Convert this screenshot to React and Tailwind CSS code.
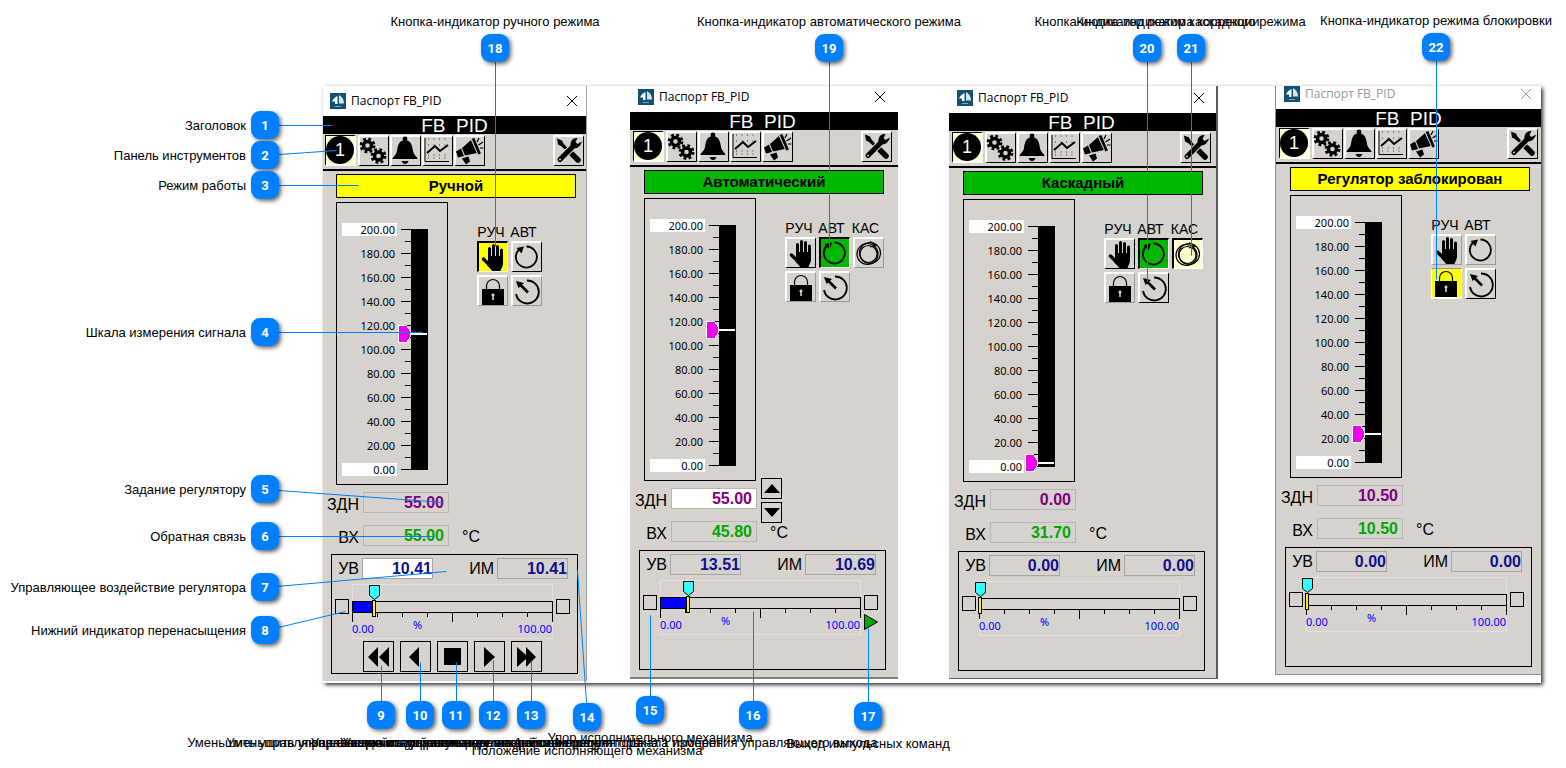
import clsx from 'clsx'

const passports = [
  {
    id: 'manual',
    frame: 'w-[264px] border-r border-[#a0a0a0]',
    shift: '',
    titleBar: 'h-[30px]',
    mode: 'Ручной',
    modeColor: 'bg-[#ffff00]',
    level: 112.5,
    setpoint: '55.00',
    input: '55.00',
    output: '10.41',
    actuator: '10.41',
    outputEditable: true,
    player: true,
    states: { hand: 'pressedYellow', loop: 'raised', lock: 'flat', gauge: 'flat' },
  },
  {
    id: 'auto',
    frame: 'ml-[43px] w-[268px] border-b-2 border-[#808080]',
    shift: 'ml-px',
    titleBar: 'h-[26px]',
    mode: 'Автоматический',
    modeColor: 'bg-[#00b800]',
    level: 112.5,
    setpoint: '55.00',
    input: '45.80',
    output: '13.51',
    actuator: '10.69',
    setpointEditable: true,
    pulse: true,
    states: { hand: 'raised', loop: 'pressedGreen', cascade: 'flat', lock: 'flat', gauge: 'flat' },
  },
  {
    id: 'cascade',
    frame: 'ml-[51px] w-[269px] border-r-2 border-b border-[#5c5c5c]',
    shift: 'ml-px',
    titleBar: 'h-[27px]',
    mode: 'Каскадный',
    modeColor: 'bg-[#00b800]',
    level: 2.5,
    setpoint: '0.00',
    input: '31.70',
    output: '0.00',
    actuator: '0.00',
    states: { hand: 'raised', loop: 'pressedGreen', cascade: 'pressedCream', lock: 'flat', gauge: 'raised' },
  },
  {
    id: 'locked',
    frame: 'ml-[57px] w-[266px] border-l border-b border-[#8c8c8c]',
    shift: 'ml-px',
    titleBar: 'h-[23px]',
    inactive: true,
    mode: 'Регулятор заблокирован',
    modeColor: 'bg-[#ffff00]',
    level: 23.5,
    setpoint: '10.50',
    input: '10.50',
    output: '0.00',
    actuator: '0.00',
    states: { hand: 'flat', loop: 'flat', lock: 'yellow', gauge: 'raised' },
  },
]

// x, y: badge centre; tx, ty: the point the leader line ends at
const callouts = [
  { n: 1, x: 265, y: 125, tx: 331, ty: 125, text: 'Заголовок', side: 'left' },
  { n: 2, x: 265, y: 155, tx: 336, ty: 150, text: 'Панель инструментов', side: 'left' },
  { n: 3, x: 265, y: 185, tx: 358, ty: 185, text: 'Режим работы', side: 'left' },
  { n: 4, x: 265, y: 332, tx: 422, ty: 332, text: 'Шкала измерения сигнала', side: 'left' },
  { n: 5, x: 265, y: 489, tx: 443, ty: 502, text: 'Задание регулятору', side: 'left' },
  { n: 6, x: 265, y: 536, tx: 434, ty: 536, text: 'Обратная связь', side: 'left' },
  { n: 7, x: 265, y: 587, tx: 446, ty: 571, text: 'Управляющее воздействие регулятора', side: 'left' },
  { n: 8, x: 265, y: 630, tx: 345, ty: 611, text: 'Нижний индикатор перенасыщения', side: 'left' },
  { n: 9, x: 381, y: 715, tx: 381, ty: 665, text: 'Уменьшить управляющее воздействие регулятора на 1 процент', side: 'bottom' },
  { n: 10, x: 420, y: 715, tx: 420, ty: 662, text: 'Уменьшить управляющее воздействие регулятора на 1 процент', side: 'bottom' },
  { n: 11, x: 456, y: 715, tx: 456, ty: 662, text: 'Управление исполнительным механизмом: стоп', side: 'bottom' },
  { n: 12, x: 493, y: 715, tx: 493, ty: 660, text: 'Увеличить управляющее воздействие регулятора', side: 'bottom' },
  { n: 13, x: 531, y: 715, tx: 531, ty: 661, text: 'Увеличить управляющее воздействие регулятора на 1 процент', side: 'bottom' },
  { n: 14, x: 587, y: 717, tx: 577, ty: 570, text: 'Положение исполняющего механизма', side: 'bottomLow' },
  { n: 15, x: 650, y: 710, tx: 650, ty: 615, text: 'Упор исполнительного механизма', side: 'bottom' },
  { n: 16, x: 753, y: 715, tx: 753, ty: 611, text: 'Шкала измерения управляющего выхода', side: 'bottom' },
  { n: 17, x: 868, y: 716, tx: 868, ty: 628, text: 'Выход импульсных команд', side: 'bottom' },
  { n: 18, x: 495, y: 48, tx: 495, ty: 246, text: 'Кнопка-индикатор ручного режима', side: 'top' },
  { n: 19, x: 829, y: 48, tx: 829, ty: 253, text: 'Кнопка-индикатор автоматического режима', side: 'top' },
  { n: 20, x: 1147, y: 48, tx: 1147, ty: 281, text: 'Кнопка-индикатор режима коррекции', side: 'top' },
  { n: 21, x: 1191, y: 48, tx: 1191, ty: 255, text: 'Кнопка-индикатор каскадного режима', side: 'top' },
  { n: 22, x: 1436, y: 47, tx: 1436, ty: 279, text: 'Кнопка-индикатор режима блокировки', side: 'top' },
]

const bevels = {
  raised: 'bg-[#d6d3ce] border-t-2 border-l-2 border-b border-r border-t-white border-l-white border-b-black border-r-black',
  flat: 'bg-[#d6d3ce] border-t-2 border-l-2 border-b border-r border-t-white border-l-white border-b-[#9a9a9a] border-r-[#9a9a9a]',
  cream: 'bg-[#ffffd0] border-t border-l border-b-2 border-r-2 border-t-black border-l-black border-b-white border-r-white',
  pressedCream: 'bg-[#ffffd0] border-t-2 border-l-2 border-b border-r border-t-black border-l-black border-b-white border-r-white',
  pressedYellow: 'bg-[#ffff00] border-t-2 border-l-2 border-b border-r border-t-black border-l-black border-b-white border-r-white',
  pressedGreen: 'bg-[#00b800] border-t-2 border-l-2 border-b border-r border-t-black border-l-black border-b-white border-r-white',
  yellow: 'bg-[#ffff00] border-t border-l border-b-2 border-r border-t-[#9a9a9a] border-l-white border-b-white border-r-white',
}

const Glyph = ({ children }) => (
  <svg viewBox="0 0 28 28" className="block w-7 h-7 shrink-0 overflow-visible" aria-hidden="true">
    {children}
  </svg>
)

const Gear = ({ cx, cy }) => (
  <>
    <circle cx={cx} cy={cy} r="4" fill="none" stroke="#000" strokeWidth="3.4" />
    <circle cx={cx} cy={cy} r="6.4" fill="none" stroke="#000" strokeWidth="3" strokeDasharray="2.7 2.326" />
  </>
)

const GearsIcon = () => (
  <Glyph>
    <Gear cx="7.5" cy="8.5" />
    <Gear cx="18.5" cy="19" />
  </Glyph>
)

const BellIcon = () => (
  <Glyph>
    <circle cx="13" cy="2" r="2.4" />
    <path d="M.5 22c0-2.500 3.500-3 4.500-8C6 8 6.500 4 13 3c6.500 1 7 5 8 11 1 5 4.500 5.500 4.500 8z" />
    <path d="M9.500 24h7c-.5 2-2 3-3.500 3s-3-1-3.500-3z" />
  </Glyph>
)

const ChartIcon = () => (
  <Glyph>
    {[2, 8, 18, 21].map((y) => (
      <path key={y} d={`M4 ${y}h22`} stroke="#333" strokeWidth="1" strokeDasharray="1 4.500" />
    ))}
    <path d="M1 1v23.500h24" fill="none" stroke="#000" />
    <path d="M3 16l8-7 5 5 8-6" fill="none" stroke="#000" strokeWidth="2" />
  </Glyph>
)

const HornIcon = () => (
  <Glyph>
    <path d="M0 14.500l5-3 3 7.500-6 1.500zM6 11l9-8 6 13-12 2.500zM6 21.500l6.500-2 1.500 5-4 3z" />
    <path d="M17 1.500l6.500 15.500" stroke="#000" strokeWidth="3" />
    <path d="M15.500 3l6 13.500" stroke="#d6d3ce" strokeWidth=".8" />
    <path d="M21 5l2-4M22.500 8l4.500-3M24 11h3.500" stroke="#000" strokeWidth="1.200" />
  </Glyph>
)

const ToolsIcon = () => (
  <Glyph>
    <path d="M2 1.500l5 2 1.500 3 8 9-1.500 1.500-9-8-3-1.500z" />
    <path d="M17 17l6 6" stroke="#000" strokeWidth="5.500" strokeLinecap="round" />
    <path d="M5 22.500L18 9.500" stroke="#d6d3ce" strokeWidth="7" strokeLinecap="round" />
    <path d="M5 22.500L18 9.500" stroke="#000" strokeWidth="5" strokeLinecap="round" />
    <path d="M22.500 1c-4-.5-7.500 2.500-7 7.500 2 4.500 9 4 11.500-4l-4.500 2.500-2-2z" />
    <circle cx="5" cy="22.500" r="1" fill="#d6d3ce" />
  </Glyph>
)

const HandIcon = () => (
  <Glyph>
    <path d="M10.500 14V5.500M14.500 13V2.500M18.500 13V3.500M22.500 14V7" stroke="#000" strokeWidth="3" strokeLinecap="round" />
    <path d="M4.500 16l6 6" stroke="#000" strokeWidth="3.400" strokeLinecap="round" />
    <path d="M9 13h15v8c-.5 3-1.500 4-2.500 7H13c-1-2-3-3.500-5-6l1-2z" />
  </Glyph>
)

const LoopIcon = () => (
  <Glyph>
    <path d="M13.500 3.500A10.500 10.500 0 1 1 6 6.500" fill="none" stroke="#000" strokeWidth="1.800" />
    <path d="M3.500 5l7.500-1.500-2.500 7z" />
  </Glyph>
)

const GaugeIcon = () => (
  <Glyph>
    <path d="M14 3.500A11.500 11.500 0 1 1 3 17" fill="none" stroke="#000" strokeWidth="1.800" />
    <path d="M15 15.500L7 7.500" stroke="#000" strokeWidth="2.600" />
    <path d="M3 4l8 2-5.500 5z" />
  </Glyph>
)

const CascadeIcon = () => (
  <Glyph>
    <g fill="none" stroke="#000" strokeWidth="1.200">
      <circle cx="12.500" cy="15" r="10.500" />
      <circle cx="15" cy="14" r="10.500" />
      <circle cx="13.500" cy="15" r="8.500" />
      <path d="M15 2.500l6 4-6 1.500" />
    </g>
  </Glyph>
)

const LockIcon = () => (
  <Glyph>
    <path d="M7.500 13V9a6.500 6.500 0 0 1 13 0v4" fill="none" stroke="#000" strokeWidth="1.200" />
    <path d="M3 12h22v16H3z" />
    <path d="M14 16.500a1.500 1.500 0 0 1 .8 2.800V23h-1.600v-3.700a1.500 1.500 0 0 1 .8-2.800z" fill="#d6d3ce" />
  </Glyph>
)

const OneIcon = () => (
  <span className="flex w-7 h-7 items-center justify-center rounded-full bg-black text-white text-lg leading-none">1</span>
)

const IconButton = ({ label, bevel = 'raised', children }) => (
  <button type="button" aria-label={label} className={clsx('w-[31px] h-[31px] shrink-0', bevels[bevel])}>
    {children}
  </button>
)

const PlainButton = ({ label, className, children }) => (
  <button type="button" aria-label={label} className={clsx('flex shrink-0 items-center justify-center border border-black', className)}>
    {children}
  </button>
)

const TitleBar = ({ height, inactive, shift }) => (
  <div className={clsx('flex items-end overflow-hidden bg-white', height)}>
    <div className={clsx('flex h-[30px] w-[263px] shrink-0 items-center pl-[7px] pr-2', shift)}>
      <svg viewBox="0 0 16 16" className="w-4 h-4" aria-hidden="true">
        <path d="M0 0h16v16H0z" fill="#135072" />
        <path d="M7.500 3v8H5V8.500H2C3 6 5 4 7.500 3z" fill="#fff" />
        <path d="M9 2c3 1.500 5 4.500 5 8.500H9z" fill="#d5e3ea" />
        <path d="M5 13.500h6" stroke="#7aa5bb" />
      </svg>
      <span className={clsx("ml-[5px] grow font-['Open_Sans',sans-serif] text-xs", inactive ? 'text-[#999]' : 'text-black')}>
        Паспорт FB_PID
      </span>
      <button type="button" aria-label="Закрыть" className="p-px">
        <svg viewBox="0 0 10 10" className="w-2.5 h-2.5" aria-hidden="true">
          <path d="M0 0l10 10M10 0L0 10" stroke={inactive ? '#999' : '#000'} />
        </svg>
      </button>
    </div>
  </div>
)

const Toolbar = ({ shift }) => (
  <div className="h-[37px] border-b-2 border-black pt-px">
    <div className={clsx('flex w-[263px] items-start gap-px px-0.5', shift)}>
      <IconButton label="Основная страница" bevel="cream"><OneIcon /></IconButton>
      <div className="ml-px flex gap-px">
        <IconButton label="Настройки"><GearsIcon /></IconButton>
        <IconButton label="Сигнализация"><BellIcon /></IconButton>
        <IconButton label="Тренд"><ChartIcon /></IconButton>
        <IconButton label="Оповещение"><HornIcon /></IconButton>
      </div>
      <span className="grow" />
      <IconButton label="Сервис"><ToolsIcon /></IconButton>
    </div>
  </div>
)

const LevelScale = ({ value }) => {
  const marks = [200, 180, 160, 140, 120, 100, 80, 60, 40, 20, 0]
  const y = 252 - Math.floor(value * 1.2)

  return (
    <div className="ml-[13px] flex h-[283px] w-[112px] border border-black pl-[5px] pt-3.5">
      <ul className="w-[55px] font-['Noto_Sans',sans-serif] text-[11px]">
        {marks.map((mark) => (
          <li key={mark} className="flex h-6 items-center">
            <span className={clsx('block h-[13px] w-full pr-0.5 text-right leading-[13px]', (mark === 200 || mark === 0) && 'bg-white')}>
              {mark.toFixed(2)}
            </span>
          </li>
        ))}
      </ul>
      <svg viewBox="0 0 34 264" className="w-[34px] h-[264px]" shapeRendering="crispEdges" aria-hidden="true">
        <path d="M14 12h17v241H14z" />
        {marks.map((mark) => (
          <path key={mark} d={`M4 ${252.5 - mark * 1.2}h10`} stroke="#000" />
        ))}
        {marks.slice(1).map((mark) => (
          <path key={mark} d={`M8 ${240.5 - mark * 1.2}h6`} stroke="#000" />
        ))}
        <path d={`M14 ${y}h16`} stroke="#fff" strokeWidth="2" />
        <path d={`M1.500 ${y - 8.5}h8l4 6v5l-4 6h-8z`} fill="#ee00ee" stroke="#fff" />
      </svg>
    </div>
  )
}

const Value = ({ id, label, value, className, labelClass, rowClass }) => (
  <div className={clsx('flex h-[21px]', rowClass)}>
    <label htmlFor={id} className={clsx('text-right text-base leading-[21px]', labelClass)}>{label}</label>
    <input
      id={id}
      defaultValue={value}
      className={clsx('h-[21px] border text-right text-base font-bold outline-none', className)}
    />
  </div>
)

const ModePad = ({ states }) => (
  <div className="ml-6 h-[280px] pt-[21px]">
    <div className="grid grid-cols-[28px_31px_31px] gap-x-[3px] text-center text-sm leading-[18px]">
      <span>РУЧ</span>
      <span>АВТ</span>
      {states.cascade && <span>КАС</span>}
    </div>
    <div className="grid grid-cols-[31px_31px_31px] gap-[3px]">
      <IconButton label="Ручной режим" bevel={states.hand}><HandIcon /></IconButton>
      <IconButton label="Автоматический режим" bevel={states.loop}><LoopIcon /></IconButton>
      {states.cascade ? (
        <IconButton label="Каскадный режим" bevel={states.cascade}><CascadeIcon /></IconButton>
      ) : (
        <span />
      )}
      <IconButton label="Блокировка" bevel={states.lock}><LockIcon /></IconButton>
      <IconButton label="Режим слежения" bevel={states.gauge}><GaugeIcon /></IconButton>
    </div>
  </div>
)

const OutputBar = ({ percent, fill }) => {
  const x = Math.round(percent * 2)

  return (
    <div className="h-[55px] w-[201px] shadow-[inset_0_0_0_1px_#e2e0dc]">
      <svg viewBox="0 0 201 39" className="block h-[39px] w-[201px] overflow-visible" shapeRendering="crispEdges" aria-hidden="true">
        <path d="M.5 17.500h200v11H.5z" fill="none" stroke="#000" />
        {fill && <path d={`M1 18h${x}v10H1z`} fill="#0000ff" />}
        {[0, 1, 2, 3, 4, 5, 6, 7, 8].map((i) => (
          <path key={i} d={`M${i * 25 + 0.5} 29v${i % 4 === 0 ? 9 : 4}`} stroke="#000" />
        ))}
        <path d={`M${x - 0.5} 16.500h3v16h-3z`} fill="#ffee00" stroke="#000" />
        <path d={`M${x - 4 + 0.5} 1.500h10v10l-5 4-5-4z`} fill="#33ffff" stroke="#000" shapeRendering="auto" />
      </svg>
      <div className="flex justify-between pr-px font-['Noto_Sans',sans-serif] text-[11px] leading-3 text-[#0000ff]">
        <span className="w-[61px]">0.00</span>
        <span className="-mt-1 grow">%</span>
        <span>100.00</span>
      </div>
    </div>
  )
}

const Player = () => (
  <div className="mt-0.5 flex gap-1.5 pl-[31px]">
    <PlainButton label="Быстро уменьшить" className="w-[31px] h-[31px]">
      <svg viewBox="0 0 22 20" className="w-[22px] h-5"><path d="M10 0v20L0 10zM21 0v20L11 10z" /></svg>
    </PlainButton>
    <PlainButton label="Уменьшить" className="w-[31px] h-[31px]">
      <svg viewBox="0 0 22 20" className="w-[22px] h-5"><path d="M14 0v20L4 10z" /></svg>
    </PlainButton>
    <PlainButton label="Стоп" className="w-[31px] h-[31px]">
      <svg viewBox="0 0 22 20" className="w-[22px] h-5"><path d="M2 1h17v17H2z" /></svg>
    </PlainButton>
    <PlainButton label="Увеличить" className="w-[31px] h-[31px]">
      <svg viewBox="0 0 22 20" className="w-[22px] h-5"><path d="M5 0v20l11-10z" /></svg>
    </PlainButton>
    <PlainButton label="Быстро увеличить" className="w-[31px] h-[31px]">
      <svg viewBox="0 0 22 20" className="w-[22px] h-5"><path d="M1 0v20l9-8v8l10-10L10 0v8z" /></svg>
    </PlainButton>
  </div>
)

const Passport = ({ data }) => (
  <section className={clsx('flex shrink-0 flex-col self-start bg-[#d6d3ce]', data.frame)}>
    <TitleBar height={data.titleBar} inactive={data.inactive} shift={data.shift} />
    <h2 className="h-[18px] bg-black text-[19px] leading-5 text-white">
      <span className={clsx('block w-[263px] text-center', data.shift)}>FB&nbsp;&nbsp;PID</span>
    </h2>
    <Toolbar shift={data.shift} />

    <div className={clsx('w-[263px] pb-[7px]', data.shift)}>
      <div className={clsx('ml-[13px] mt-[3px] h-6 w-[240px] border border-black text-center text-[15px] font-bold leading-[22px]', data.modeColor)}>
        {data.mode}
      </div>

      <div className="mt-1 flex">
        <div className="w-[126px] shrink-0">
          <LevelScale value={data.level} />
          <Value
            id={`${data.id}-sp`}
            label="ЗДН"
            value={data.setpoint}
            rowClass="mt-[7px]"
            labelClass="w-9 pt-0.5"
            className={clsx('ml-1 w-[86px] pr-1 text-[#800080] border-[#bab8b4]', data.setpointEditable ? 'bg-white' : 'bg-transparent')}
          />
          <Value
            id={`${data.id}-pv`}
            label="ВХ"
            value={data.input}
            rowClass="mt-3"
            labelClass="w-9 pt-0.5"
            className="ml-1 w-[86px] border-[#bab8b4] bg-transparent pr-1 text-[#00a800]"
          />
        </div>
        <div className="ml-1">
          <ModePad states={data.states} />
          <div className="flex h-[45px] flex-col gap-[3px]">
            {data.setpointEditable && (
              <>
                <PlainButton label="Увеличить задание" className="w-[21px] h-[21px]">
                  <svg viewBox="0 0 16 9" className="w-4 h-[9px]"><path d="M8 0l8 9H0z" /></svg>
                </PlainButton>
                <PlainButton label="Уменьшить задание" className="w-[21px] h-[21px]">
                  <svg viewBox="0 0 16 9" className="w-4 h-[9px]"><path d="M8 9l8-9H0z" /></svg>
                </PlainButton>
              </>
            )}
          </div>
          <span className="block pl-[9px] text-base leading-5">°C</span>
        </div>
      </div>

      <div className="ml-2 mt-[7px] h-[120px] w-[247px] border border-black pt-[3px]">
        <div className="flex">
          <Value
            id={`${data.id}-out`}
            label="УВ"
            value={data.output}
            labelClass="w-[27px]"
            className={clsx('ml-[3px] w-[71px] border-[#a8a6a2] text-[#101090]', data.outputEditable ? 'bg-white' : 'bg-transparent')}
          />
          <Value
            id={`${data.id}-act`}
            label="ИМ"
            value={data.actuator}
            labelClass="w-[61px]"
            className="ml-[3px] w-[71px] border-[#a8a6a2] bg-transparent text-[#101090]"
          />
        </div>
        <div className="mt-[5px] flex items-start pl-[3px]">
          <span className="mr-[3px] mt-[15px] h-[15px] w-3.5 border border-black" />
          <OutputBar percent={Number(data.output)} fill={Number(data.output) > 0} />
          <div className="ml-[3px] mt-[15px]">
            <span className="block h-[15px] w-3.5 border border-black" />
            {data.pulse && (
              <svg viewBox="0 0 14 16" className="mt-1 h-4 w-3.5" aria-hidden="true">
                <path d="M.5.5v15l13-7.500z" fill="#00a800" stroke="#000" />
              </svg>
            )}
          </div>
        </div>
        {data.player && <Player />}
      </div>
    </div>
  </section>
)

const captionPlaces = {
  left: 'right-full mr-[5px] pt-px',
  top: 'bottom-full mb-[3px]',
  bottom: 'top-full mt-[5px]',
  bottomLow: 'top-full mt-[11px]',
}

const Callout = ({ item }) => (
  <div
    className="absolute flex h-7 w-7 -translate-x-1/2 -translate-y-1/2 items-center justify-center"
    style={{ left: item.x, top: item.y }}
  >
    <span className="flex h-7 w-7 shrink-0 items-center justify-center rounded-[9px] bg-[#0080ff] pt-px font-['Roboto',sans-serif] text-[13px] font-bold text-white shadow-[2px_2px_4px_rgba(0,0,0,0.6)]">
      {item.n}
    </span>
    <span className={clsx('absolute whitespace-nowrap text-[13px] leading-[18px]', captionPlaces[item.side])}>{item.text}</span>
  </div>
)

const App = () => (
  <main className="relative min-h-screen overflow-hidden bg-white pb-20 pl-[323px] pt-[86px] font-['Liberation_Sans',Arial,sans-serif] text-black">
    <div className="flex w-max bg-white pb-0.5 shadow-[2px_2px_4px_rgba(0,0,0,0.8)]">
      {passports.map((data) => (
        <Passport key={data.id} data={data} />
      ))}
    </div>

    <svg className="pointer-events-none absolute inset-0 h-full w-full" aria-hidden="true">
      {callouts.map((item) => (
        <line key={item.n} x1={item.x + 0.5} y1={item.y + 0.5} x2={item.tx + 0.5} y2={item.ty + 0.5} stroke="#0080ff" />
      ))}
    </svg>
    {callouts.map((item) => (
      <Callout key={item.n} item={item} />
    ))}
  </main>
)

export default App
